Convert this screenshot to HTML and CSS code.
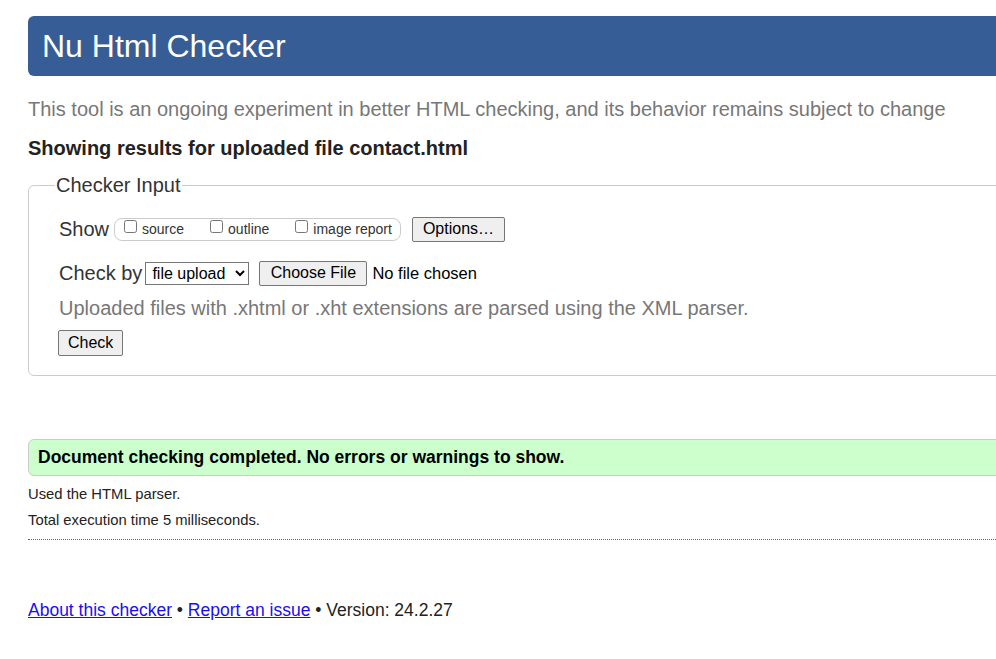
FILE: index.html
```html
<!DOCTYPE html>
<html lang="en">
<head>
<meta charset="utf-8">
<title>Showing results for contact.html - Nu Html Checker</title>
<link rel="stylesheet" href="styles.css">
</head>
<body>
<div class="page">
  <h1 class="title">Nu Html Checker</h1>
  <p class="about">This tool is an ongoing experiment in better HTML checking, and its behavior remains subject to change</p>
  <h2 class="results-head">Showing results for uploaded file contact.html</h2>
  <form class="checker">
    <fieldset class="input-set">
      <legend class="legend">Checker Input</legend>
      <div class="row row-show">
        <span class="label">Show</span>
        <span class="show-group">
          <label class="opt"><input type="checkbox" class="cb"><span>source</span></label>
          <label class="opt"><input type="checkbox" class="cb"><span>outline</span></label>
          <label class="opt"><input type="checkbox" class="cb"><span>image report</span></label>
        </span>
        <button type="button" class="btn btn-options">Options…</button>
      </div>
      <div class="row row-by">
        <span class="label label-by">Check by</span>
        <select class="sel"><option>file upload</option></select>
        <button type="button" class="btn btn-file">Choose File</button>
        <span class="nofile">No file chosen</span>
      </div>
      <p class="hint">Uploaded files with .xhtml or .xht extensions are parsed using the XML parser.</p>
      <button type="button" class="btn btn-check">Check</button>
    </fieldset>
  </form>
  <div class="success">Document checking completed. No errors or warnings to show.</div>
  <p class="stats">Used the HTML parser.</p>
  <p class="stats">Total execution time 5 milliseconds.</p>
  <hr class="sep">
  <p class="footer"><a href="#" class="link">About this checker</a> • <a href="#" class="link">Report an issue</a> • Version: 24.2.27</p>
</div>
</body>
</html>
```
FILE: styles.css
```css
html, body {
  margin: 0;
  padding: 0;
  overflow: hidden;
  background: #fff;
}
body {
  font-family: "Liberation Sans", Arial, sans-serif;
  color: #222;
}
.page {
  width: 1100px;
  padding: 16px 0 0 28px;
}
.title {
  margin: 0;
  height: 60px;
  line-height: 60px;
  padding-left: 14px;
  background: #365d95;
  color: #fff;
  font-size: 32px;
  font-weight: normal;
  border-radius: 6px;
}
.about {
  margin: 21px 0 0;
  font-size: 20px;
  line-height: 24px;
  color: #777;
}
.results-head {
  margin: 15px 0 0;
  font-size: 20px;
  line-height: 24px;
  font-weight: bold;
  color: #222;
}
.checker {
  margin: 13px 0 0;
}
.input-set {
  margin: 0;
  padding: 0 0 19px 30px;
  border: 1px solid #ccc;
  border-radius: 6px;
}
.legend {
  font-size: 20px;
  line-height: 24px;
  padding: 0 1px;
  margin-left: -4px;
  color: #333;
}
.row {
  display: flex;
  align-items: center;
  height: 26px;
  font-size: 20px;
  color: #333;
}
.row-show {
  margin-top: 19px;
}
.row-by {
  margin-top: 18px;
}
.label {
  margin-right: 5px;
}
.label-by {
  margin-right: 3px;
}
.show-group {
  display: flex;
  align-items: center;
  height: 21px;
  border: 1px solid #ccc;
  border-radius: 8px;
  padding: 0 8px 0 5px;
  font-size: 14px;
  margin-right: 11px;
}
.opt {
  display: flex;
  align-items: center;
  margin-right: 22px;
}
.opt:last-child {
  margin-right: 0;
}
.cb {
  margin: 0 5px 0 4px;
  position: relative;
  top: -3px;
  width: 13px;
  height: 13px;
}
.btn {
  font-family: "Liberation Sans", Arial, sans-serif;
  font-size: 16px;
  color: #000;
  background: #efefef;
  border: 1px solid #767676;
  border-radius: 2px;
  height: 25px;
  padding: 0 10px;
}
.sel {
  font-family: "Liberation Sans", Arial, sans-serif;
  font-size: 16px;
  color: #000;
  height: 23px;
  width: 104px;
  margin-right: 10px;
  border: 1px solid #767676;
  border-radius: 0;
  background: #fff;
  padding: 0 0 0 2px;
}
.btn-file {
  width: 108px;
  padding: 0;
}
.nofile {
  font-size: 16.5px;
  color: #000;
  margin-left: 5px;
}
.hint {
  margin: 10px 0 0;
  font-size: 20px;
  line-height: 24px;
  color: #777;
}
.btn-check {
  margin-top: 10px;
  height: 26px;
  padding: 0 9px;
  display: block;
  margin-left: -1px;
}
.success {
  margin-top: 63px;
  height: 35px;
  line-height: 35px;
  padding-left: 9px;
  background: #ccffcc;
  border: 1px solid #ccc;
  border-radius: 6px;
  font-size: 17.5px;
  font-weight: bold;
  color: #000;
}
.stats {
  margin: 9px 0 0;
  font-size: 14.8px;
  line-height: 18px;
  color: #222;
}
.stats + .stats {
  margin-top: 8px;
}
.sep {
  margin: 10px 0 0;
  border: 0;
  border-top: 1px dotted #666;
  height: 0;
}
.footer {
  margin: 60px 0 0;
  font-size: 17.5px;
  line-height: 20px;
  color: #222;
}
.link {
  color: #1a0dee;
  text-decoration: underline;
}
```
